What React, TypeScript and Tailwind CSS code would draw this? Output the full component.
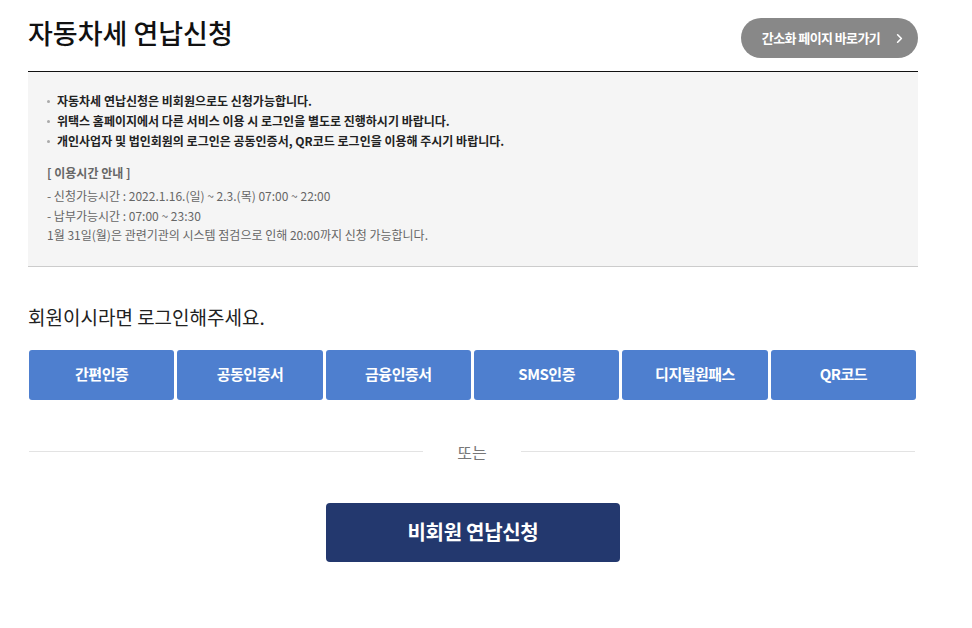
import { ChevronRight } from "lucide-react";

const loginMethods = ["간편인증", "공동인증서", "금융인증서", "SMS인증", "디지털원패스", "QR코드"];

const notices = [
  "자동차세 연납신청은 비회원으로도 신청가능합니다.",
  "위택스 홈페이지에서 다른 서비스 이용 시 로그인을 별도로 진행하시기 바랍니다.",
  "개인사업자 및 법인회원의 로그인은 공동인증서, QR코드 로그인을 이용해 주시기 바랍니다.",
];

export default function App() {
  return (
    <div className="min-h-screen bg-white text-[#111] [font-family:'Noto_Sans_CJK_KR','Noto_Sans',sans-serif]">
      <div className="ml-[28px] w-[890px]">
        <header className="flex h-[71px] items-start justify-between">
          <h1 className="mt-[14px] text-[27px] font-medium leading-[38px] tracking-[0px]">자동차세 연납신청</h1>
          <button
            type="button"
            className="mt-[18px] flex h-[40px] w-[177px] items-center justify-center gap-[12px] rounded-full bg-[#888888] pl-[10px] text-[13px] font-bold tracking-[-0.6px] text-white"
          >
            간소화 페이지 바로가기
            <ChevronRight size={15} strokeWidth={2.6} />
          </button>
        </header>

        <section className="border-t border-b border-t-[#111] border-b-[#cccccc] bg-[#f5f5f5] px-[19px] pt-[20px] pb-[21px]">
          <ul className="grid gap-[2px]">
            {notices.map((line) => (
              <li key={line} className="flex items-center gap-[7px] text-[12px] font-bold leading-[18px] tracking-[0px] text-[#222]">
                <span className="h-[3px] w-[3px] rounded-full bg-[#aaa]" />
                {line}
              </li>
            ))}
          </ul>
          <p className="mt-[14px] text-[12px] font-bold leading-[18px] tracking-[0px] text-[#666]">[ 이용시간 안내 ]</p>
          <div className="mt-[4px] text-[12px] leading-[19.5px] tracking-[0px] text-[#666]">
            <p>- 신청가능시간 : 2022.1.16.(일) ~ 2.3.(목) 07:00 ~ 22:00</p>
            <p>- 납부가능시간 : 07:00 ~ 23:30</p>
            <p>1월 31일(월)은 관련기관의 시스템 점검으로 인해 20:00까지 신청 가능합니다.</p>
          </div>
        </section>

        <p className="mt-[37px] text-[19px] leading-[26px] tracking-[0px] text-[#222]">회원이시라면 로그인해주세요.</p>

        <div className="mt-[20px] grid grid-cols-6 gap-[3px] pl-[1px] pr-[2px]">
          {loginMethods.map((m) => (
            <button
              key={m}
              type="button"
              className="h-[50px] rounded-[3px] bg-[#4e7fcf] text-[15px] font-bold tracking-[-0.5px] text-white"
            >
              {m}
            </button>
          ))}
        </div>

        <div className="mt-[41px] flex items-center gap-[34px] pl-[1px] pr-[3px]">
          <div className="h-px flex-1 bg-[#e3e3e3]" />
          <span className="text-[16px] leading-[22px] text-[#777]">또는</span>
          <div className="h-px flex-1 bg-[#e3e3e3]" />
        </div>

        <div className="mt-[40px] flex justify-center">
          <button
            type="button"
            className="h-[59px] w-[294px] rounded-[4px] bg-[#23386e] text-[20px] font-bold tracking-[-0.3px] text-white"
          >
            비회원 연납신청
          </button>
        </div>
      </div>
    </div>
  );
}
